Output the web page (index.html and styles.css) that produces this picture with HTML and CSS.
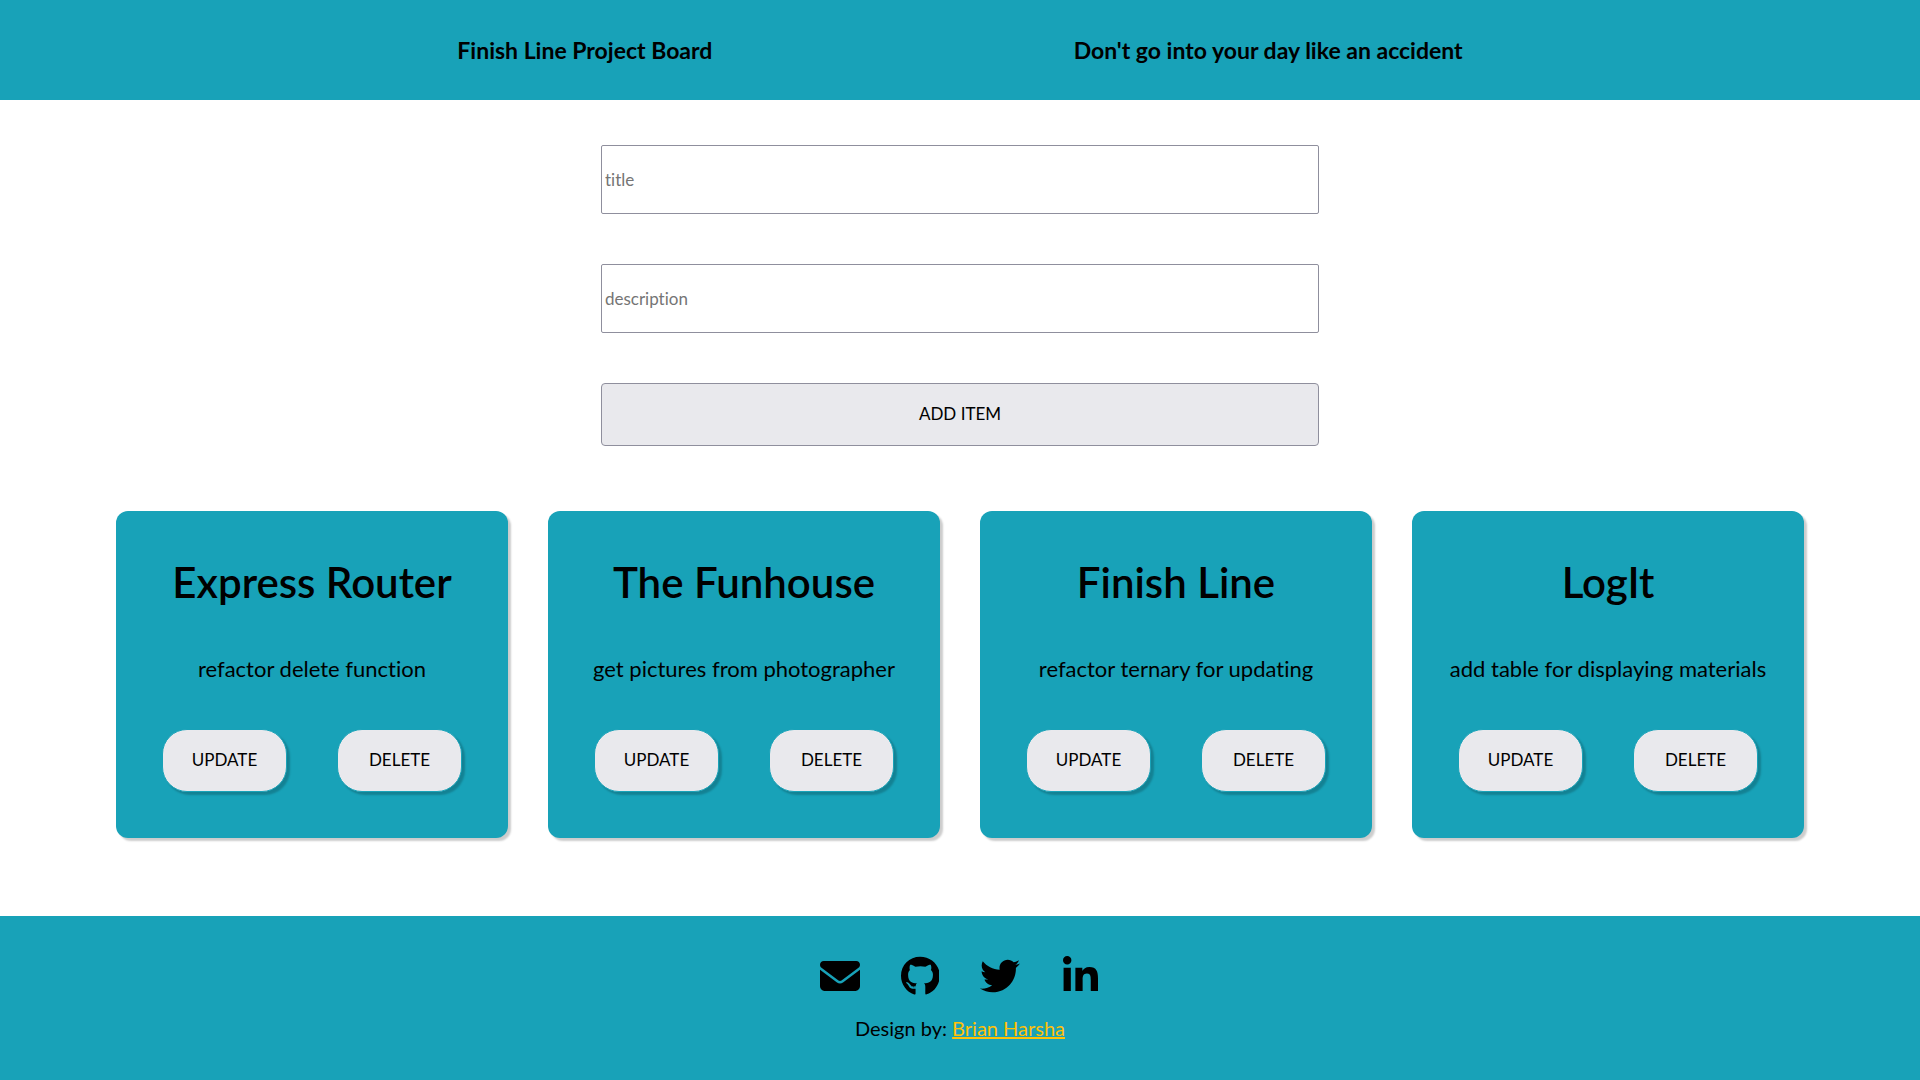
FILE: index.html
```html
<!DOCTYPE html>
<html lang="en">
<head>
<meta charset="utf-8">
<meta name="viewport" content="width=device-width, initial-scale=1">
<title>Finish Line Project Board</title>
<link rel="stylesheet" href="styles.css">
</head>
<body>
<header class="site-header">
  <h1 class="site-title">Finish Line Project Board</h1>
  <p class="site-title">Don't go into your day like an accident</p>
</header>
<main class="main">
  <form class="item-form">
    <input class="field" type="text" placeholder="title" aria-label="title">
    <input class="field" type="text" placeholder="description" aria-label="description">
    <button class="add-button" type="button">ADD ITEM</button>
  </form>
  <section class="cards">
    <article class="card">
      <h2 class="card-title">Express Router</h2>
      <p class="card-text">refactor delete function</p>
      <div class="card-actions"><button class="pill" type="button">UPDATE</button><button class="pill" type="button">DELETE</button></div>
    </article>
    <article class="card">
      <h2 class="card-title">The Funhouse</h2>
      <p class="card-text">get pictures from photographer</p>
      <div class="card-actions"><button class="pill" type="button">UPDATE</button><button class="pill" type="button">DELETE</button></div>
    </article>
    <article class="card">
      <h2 class="card-title">Finish Line</h2>
      <p class="card-text">refactor ternary for updating</p>
      <div class="card-actions"><button class="pill" type="button">UPDATE</button><button class="pill" type="button">DELETE</button></div>
    </article>
    <article class="card">
      <h2 class="card-title">LogIt</h2>
      <p class="card-text">add table for displaying materials</p>
      <div class="card-actions"><button class="pill" type="button">UPDATE</button><button class="pill" type="button">DELETE</button></div>
    </article>
  </section>
</main>
<footer class="site-footer">
  <nav class="social">
    <a class="social-link" href="#" aria-label="Email"><svg class="icon" viewBox="0 0 512 512"><path d="M48 64C21.5 64 0 85.5 0 112c0 15.1 7.1 29.3 19.2 38.4L236.8 313.6c11.4 8.5 27 8.5 38.4 0L492.8 150.4c12.1-9.1 19.2-23.3 19.2-38.4c0-26.5-21.5-48-48-48H48zM0 176V384c0 35.3 28.7 64 64 64H448c35.3 0 64-28.7 64-64V176L294.4 339.2c-22.8 17.1-54 17.1-76.8 0L0 176z"/></svg></a>
    <a class="social-link" href="#" aria-label="GitHub"><svg class="icon" viewBox="0 0 496 512"><path d="M165.900 397.400c0 2-2.300 3.600-5.200 3.600-3.300.3-5.600-1.300-5.600-3.600 0-2 2.300-3.600 5.200-3.600 3-.3 5.600 1.300 5.600 3.600zm-31.100-4.500c-.7 2 1.300 4.300 4.300 4.900 2.600 1 5.600 0 6.200-2s-1.300-4.300-4.300-5.200c-2.600-.7-5.500.3-6.200 2.300zm44.200-1.700c-2.900.7-4.900 2.600-4.600 4.900.3 2 2.900 3.300 5.900 2.600 2.900-.7 4.900-2.600 4.600-4.600-.3-1.900-3-3.200-5.900-2.900zM244.800 8C106.100 8 0 113.300 0 252c0 110.900 69.800 205.800 169.500 239.200 12.800 2.300 17.300-5.600 17.300-12.100 0-6.200-.3-40.400-.3-61.400 0 0-70 15-84.700-29.800 0 0-11.400-29.100-27.800-36.600 0 0-22.900-15.700 1.600-15.400 0 0 24.900 2 38.600 25.800 21.900 38.600 58.600 27.500 72.900 20.900 2.300-16 8.800-27.100 16-33.700-55.900-6.200-112.300-14.300-112.300-110.500 0-27.500 7.600-41.300 23.600-58.900-2.600-6.500-11.100-33.300 2.600-67.900 20.900-6.500 69 27 69 27 20-5.600 41.500-8.500 62.800-8.500s42.800 2.900 62.800 8.500c0 0 48.100-33.600 69-27 13.700 34.700 5.200 61.400 2.600 67.900 16 17.700 25.800 31.500 25.800 58.900 0 96.500-58.900 104.200-114.800 110.500 9.200 7.900 17 22.900 17 46.400 0 33.700-.3 75.400-.3 83.600 0 6.500 4.600 14.400 17.300 12.100C428.200 457.800 496 362.900 496 252 496 113.300 383.500 8 244.800 8z"/></svg></a>
    <a class="social-link" href="#" aria-label="Twitter"><svg class="icon" viewBox="0 0 512 512"><path d="M459.370 151.716c.325 4.548.325 9.097.325 13.645 0 138.720-105.583 298.558-298.558 298.558-59.452 0-114.680-17.219-161.137-47.106 8.447.974 16.568 1.299 25.340 1.299 49.055 0 94.213-16.568 130.274-44.832-46.132-.975-84.792-31.188-98.112-72.772 6.498.974 12.995 1.624 19.818 1.624 9.421 0 18.843-1.300 27.614-3.573-48.081-9.747-84.143-51.980-84.143-102.985v-1.299c13.969 7.797 30.214 12.670 47.431 13.319-28.264-18.843-46.781-51.005-46.781-87.391 0-19.492 5.197-37.360 14.294-52.954 51.655 63.675 129.300 105.258 216.365 109.807-1.624-7.797-2.599-15.918-2.599-24.040 0-57.828 46.782-104.934 104.934-104.934 30.213 0 57.502 12.670 76.670 33.137 23.715-4.548 46.456-13.320 66.599-25.340-7.798 24.366-24.366 44.833-46.132 57.827 21.117-2.273 41.584-8.122 60.426-16.243-14.292 20.791-32.161 39.308-52.628 54.253z"/></svg></a>
    <a class="social-link" href="#" aria-label="LinkedIn"><svg class="icon" viewBox="0 0 448 512"><path d="M100.280 448H7.400V148.900h92.880zM53.790 108.100C24.090 108.100 0 83.500 0 53.800a53.790 53.790 0 0 1 107.580 0c0 29.700-24.100 54.300-53.790 54.300zM447.900 448h-92.680V302.400c0-34.700-.7-79.200-48.290-79.200-48.290 0-55.690 37.700-55.690 76.700V448h-92.780V148.900h89.080v40.800h1.300c12.400-23.500 42.690-48.300 87.880-48.300 94 0 111.280 61.900 111.280 142.300V448z"/></svg></a>
  </nav>
  <p class="credit">Design by: <a class="credit-link" href="#">Brian Harsha</a></p>
</footer>
</body>
</html>
```
FILE: styles.css
```css
* {
  box-sizing: border-box;
}

body {
  margin: 0;
  min-height: 100vh;
  display: flex;
  flex-direction: column;
  font-family: Lato, sans-serif;
  font-variant-ligatures: none;
  color: #000;
  background: #fff;
}

.site-header {
  display: flex;
  justify-content: space-evenly;
  align-items: center;
  min-height: 100px;
  padding: 0 5%;
  background: #18a2b8;
}

.site-title {
  margin: 0;
  font-size: 23px;
  font-weight: 700;
  line-height: 30px;
}

.main {
  flex: 1;
  padding: 45px 0;
}

.item-form {
  display: flex;
  flex-direction: column;
  gap: 50px;
  width: 37.4%;
  margin: 0 auto 65px;
}

.field,
.add-button {
  font-family: inherit;
  font-size: 17px;
  font-variant-ligatures: inherit;
  border: 1px solid #8f8f9d;
}

.field {
  width: 100%;
  height: 69px;
  padding: 0 3px;
  border-radius: 2px;
  background: #fff;
}

.field::placeholder {
  color: #757575;
}

.add-button {
  height: 63px;
  padding: 0 0 2px;
  border-radius: 4px;
  background: #e9e9ed;
  color: #000;
}

.cards {
  display: flex;
  flex-wrap: wrap;
  justify-content: center;
  gap: 40px;
}

.card {
  flex: 0 1 392px;
  display: flex;
  flex-direction: column;
  align-items: center;
  padding: 46px 20px;
  border-radius: 12px;
  background: #18a2b8;
  box-shadow: 3px 3px 2px rgba(0, 0, 0, 0.2);
  text-align: center;
}

.card-title {
  margin: 0 0 42px;
  font-size: 42px;
  font-weight: 600;
  line-height: 50px;
}

.card-text {
  margin: 0 0 40px;
  font-size: 22px;
  line-height: 40px;
}

.card-actions {
  display: flex;
  gap: 50px;
}

.pill {
  width: 125px;
  height: 63px;
  padding: 0 0 2px;
  border: 1px solid #18a2b8;
  border-radius: 25px;
  background: #e9e9ed;
  box-shadow: 3px 3px 2px rgba(0, 0, 0, 0.2);
  color: #000;
  font-family: inherit;
  font-size: 17px;
}

.site-footer {
  display: flex;
  flex-direction: column;
  align-items: center;
  gap: 20px;
  padding: 40px 0;
  background: #18a2b8;
}

.social {
  display: flex;
  gap: 40px;
}

.social-link {
  display: flex;
  justify-content: center;
  width: 40px;
  color: #000;
}

.icon {
  height: 40px;
  fill: currentColor;
}

.credit {
  margin: 0;
  font-size: 20px;
  line-height: 24px;
}

.credit-link {
  color: #ffc107;
}
```
